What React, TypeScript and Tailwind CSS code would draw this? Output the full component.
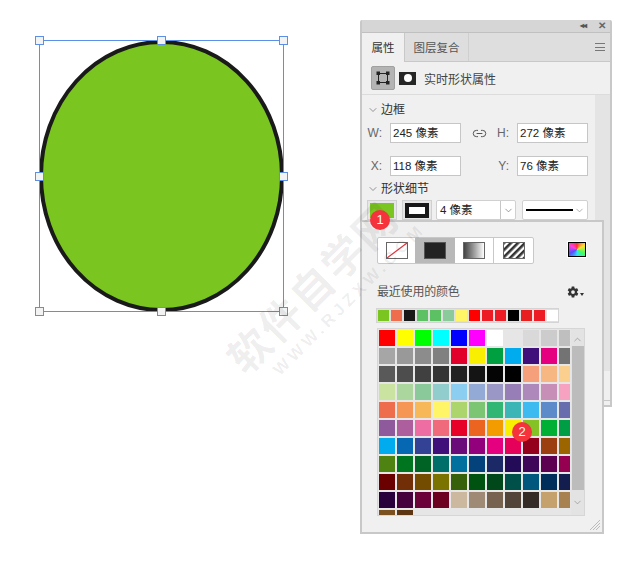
import { ChevronDown, ChevronUp, Link2 } from 'lucide-react'
import { IoSettingsSharp } from 'react-icons/io5'

const font = 'font-["Liberation_Sans","Noto_Sans_CJK_SC",sans-serif]'

const recent = ['#7ac520', '#ee6d4c', '#181818', '#5cc163', '#5cc163', '#8bcb9b', '#fff566', '#ff0000', '#ed1c24', '#ed1c24', '#000000', '#e81f1f', '#ed1c24', '#ffffff']

const swatches = [
  ['#ff0000', '#ffff00', '#00ff00', '#00ffff', '#0000ff', '#ff00ff', '#ffffff', '#e6e6e6', '#d9d9d9', '#cccccc', '#bfbfbf'],
  ['#a6a6a6', '#999999', '#8c8c8c', '#808080', '#e00029', '#f8f000', '#00a040', '#00aced', '#3f107a', '#e4007f', '#737373'],
  ['#595959', '#4d4d4d', '#404040', '#333333', '#222222', '#141414', '#040404', '#000000', '#f5a07a', '#f7b782', '#fbcf8e'],
  ['#cbe3a0', '#abd69e', '#89c99a', '#90cdcc', '#8ccdf2', '#93a9d6', '#9a97c6', '#977eb6', '#ae88ba', '#c78eb8', '#f6a2c0'],
  ['#ee6d4c', '#f59654', '#f6b858', '#fff566', '#acd56e', '#7bc573', '#32b673', '#3bb5b5', '#3dbaef', '#5d8ac8', '#686ead'],
  ['#8e5a9c', '#ad5e9c', '#ee6ea3', '#ef6a7a', '#e60027', '#eb6420', '#f39c00', '#f8f000', '#85c226', '#00b035', '#009e44'],
  ['#00aced', '#0668b3', '#334294', '#3f107a', '#690c7a', '#93007c', '#e4007f', '#e5005a', '#94001b', '#9b3f10', '#9c6500'],
  ['#4e8211', '#00751f', '#006326', '#006f69', '#00709e', '#03427a', '#1b2a66', '#240b57', '#3f0558', '#5d0052', '#960050'],
  ['#6a0000', '#722e07', '#744c00', '#7a7300', '#37600a', '#005211', '#00471a', '#00504a', '#00577e', '#002e5a', '#131e4e'],
  ['#2a003c', '#46003c', '#6c0039', '#6c0021', '#cbb89e', '#9f8b75', '#76624f', '#534439', '#352b27', '#c5a26d', '#a7814f'],
  ['#7a5020', '#5c3513'],
]

function Handle({ className }: { className: string }) {
  return <div className={`absolute w-[9px] h-[9px] bg-[#f3f3f3] border border-[#5b8fe8] ${className}`} />
}

function Badge({ n, className }: { n: number; className: string }) {
  return (
    <div className={`absolute w-5 h-5 rounded-full bg-[#f4333c] text-white text-[13px] leading-5 text-center ${className}`}>{n}</div>
  )
}

function Field({ label, value, labelWidth }: { label: string; value: string; labelWidth: string }) {
  return (
    <div className="flex items-center">
      <span className={`${labelWidth} text-[12px] text-[#666] text-right pr-[8px]`}>{label}</span>
      <div className="w-[71px] h-5 bg-white border border-[#c6c6c6] text-[11.5px] leading-[19px] pl-[2px] text-[#222]">{value}</div>
    </div>
  )
}

export default function App() {
  return (
    <div className={`relative w-[639px] h-[569px] bg-white overflow-hidden ${font}`}>
      {/* shape on canvas */}
      <svg className="absolute left-[39px] top-[40px]" width="246" height="273" viewBox="0 0 246 273">
        <ellipse cx="122.5" cy="136" rx="120.5" ry="134" fill="#7ac520" stroke="#1a1a1a" strokeWidth="4" />
        <rect x="0.5" y="0.5" width="244" height="271" fill="none" stroke="#5b8fe8" strokeWidth="1" />
      </svg>
      <Handle className="left-[35px] top-[36px]" />
      <Handle className="left-[157px] top-[36px]" />
      <Handle className="left-[279px] top-[36px]" />
      <Handle className="left-[35px] top-[172px]" />
      <Handle className="left-[279px] top-[172px]" />
      <Handle className="left-[35px] top-[307px]" />
      <Handle className="left-[157px] top-[307px]" />
      <Handle className="left-[279px] top-[307px]" />

      {/* properties panel */}
      <div className="absolute left-[360px] top-[20px] w-[252px] h-[387px] bg-[#f0f0f0] border-2 border-[#c8c8c8] border-t-0 rounded-t-[2px] flex flex-col">
        <div className="h-[13px] shrink-0 bg-[#d6d6d6] border-b border-[#c0c0c0] flex items-center justify-end gap-[12px] pr-[4px] text-[#555]">
          <span className="text-[8px] leading-none tracking-[-1px] font-bold">◂◂</span>
          <span className="text-[10px] leading-none font-bold text-[#666]">✕</span>
        </div>
        <div className="h-[29px] shrink-0 flex bg-[#dedede] border-b border-[#c8c8c8] text-[11.5px]">
          <div className="w-[43px] h-[29px] bg-[#f0f0f0] border-r border-[#c8c8c8] text-[#333] text-center leading-[30px]">属性</div>
          <div className="w-[64px] border-r border-[#cfcfcf] text-[#555] text-center leading-[30px]">图层复合</div>
          <div className="ml-auto mr-[5px] mt-[10px] w-[10px] h-[8px] border-y border-[#777] flex items-center">
            <div className="w-full h-px bg-[#777]" />
          </div>
        </div>
        <div className="h-[33px] shrink-0 flex items-center pl-[9px] border-b border-[#dcdcdc]">
          <div className="w-6 h-6 bg-[#b4b4b4] border border-[#a0a0a0] rounded-[2px] flex items-center justify-center">
            <svg width="14" height="14" viewBox="0 0 14 14" fill="none" stroke="#222" strokeWidth="1">
              <rect x="2.5" y="2.5" width="9" height="9" />
              <rect x="1" y="1" width="2.5" height="2.5" fill="#222" />
              <rect x="10.5" y="1" width="2.5" height="2.5" fill="#222" />
              <rect x="1" y="10.5" width="2.5" height="2.5" fill="#222" />
              <rect x="10.5" y="10.5" width="2.5" height="2.5" fill="#222" />
            </svg>
          </div>
          <div className="ml-1 w-[17px] h-[13px] bg-[#262626] flex items-center justify-center">
            <div className="w-2 h-2 rounded-full bg-white" />
          </div>
          <span className="ml-2 mt-[3px] text-[12px] text-[#444]">实时形状属性</span>
        </div>
        <div className="flex-1 flex min-h-0">
          <div className="flex-1 min-w-0 pt-[6px] pl-[5px]">
            <div className="flex items-center h-[18px] text-[12px] text-[#333]">
              <ChevronDown size={12} strokeWidth={1.2} className="mr-[2px] text-[#555]" />
              边框
            </div>
            <div className="flex items-center mt-[4px]">
              <Field label="W:" value="245 像素" labelWidth="w-[23px]" />
              <Link2 size={15} strokeWidth={1.6} className="ml-[11px] text-[#555]" />
              <Field label="H:" value="272 像素" labelWidth="w-[30px]" />
            </div>
            <div className="flex items-center mt-[13px]">
              <Field label="X:" value="118 像素" labelWidth="w-[23px]" />
              <div className="w-[26px]" />
              <Field label="Y:" value="76 像素" labelWidth="w-[30px]" />
            </div>
            <div className="flex items-center h-[18px] mt-[4px] text-[12px] text-[#333]">
              <ChevronDown size={12} strokeWidth={1.2} className="mr-[2px] text-[#555]" />
              形状细节
            </div>
          </div>
          <div className="w-[15px] shrink-0 flex flex-col">
            <div className="h-[276px] bg-[#e4e4e4]" />
          </div>
        </div>
        <div className="h-[5px] shrink-0 border-t border-[#c8c8c8]" />
      </div>

      {/* fill / stroke row, above the popup */}
      <div className="absolute left-[367px] top-[200px] flex items-start">
        <div className="w-[30px] h-5 bg-[#e6e6e6] border border-[#d0d0d0] flex items-center justify-center">
          <div className="w-6 h-[15px] bg-[#7ac520]" />
        </div>
        <div className="ml-[5px] w-[30px] h-5 bg-[#e6e6e6] border border-[#d0d0d0] flex items-center justify-center">
          <div className="w-6 h-[15px] border-[4px] border-[#181818] bg-white" />
        </div>
        <div className="ml-1 w-[80px] h-5 bg-white border border-[#d0d0d0] rounded-[2px] flex text-[11.5px] text-[#222] leading-[19px]">
          <span className="flex-1 pl-[3px]">4 像素</span>
          <div className="w-[15px] border-l border-[#c6c6c6] flex items-center justify-center">
            <ChevronDown size={11} strokeWidth={1.4} className="text-[#666]" />
          </div>
        </div>
        <div className="ml-[6px] w-[66px] h-5 bg-white border border-[#d0d0d0] rounded-[2px] flex items-center pl-[3px]">
          <div className="w-[47px] h-[2px] bg-black" />
          <ChevronDown size={11} strokeWidth={1.4} className="ml-[1px] text-[#888]" />
        </div>
      </div>

      {/* colour popup */}
      <div className="absolute left-[360px] top-[220px] w-[244px] h-[314px] bg-[#f0f0f0] border-2 border-[#c8c8c8] pt-[15px] pl-[15px]">
        <div className="flex items-start">
          <div className="h-[27px] flex border border-[#c8c8c8] bg-white rounded-[2px]">
            <div className="w-[37px] flex items-center justify-center">
              <svg width="22" height="17" viewBox="0 0 22 17">
                <rect x="0.5" y="0.5" width="21" height="16" fill="white" stroke="#666" />
                <line x1="1" y1="16" x2="21" y2="1" stroke="#e2333a" strokeWidth="1.2" />
              </svg>
            </div>
            <div className="w-[40px] bg-[#b9b9b9] flex items-center justify-center">
              <div className="w-[22px] h-[17px] bg-[#222] border border-[#555]" />
            </div>
            <div className="w-[39px] flex items-center justify-center border-r border-[#c8c8c8]">
              <div className="w-[22px] h-[17px] border border-[#666] bg-gradient-to-r from-[#444] to-white" />
            </div>
            <div className="w-[39px] flex items-center justify-center">
              <svg width="22" height="17" viewBox="0 0 22 17">
                <defs>
                  <pattern id="hatch" width="5" height="5" patternUnits="userSpaceOnUse" patternTransform="rotate(-45)">
                    <rect width="5" height="2.6" fill="#333" />
                  </pattern>
                </defs>
                <rect x="0.5" y="0.5" width="21" height="16" fill="url(#hatch)" stroke="#666" />
              </svg>
            </div>
          </div>
          <div className="ml-[33px] mt-[4px] w-[20px] h-[17px] p-[1px] bg-white">
            <div className="w-full h-full border border-black bg-[conic-gradient(#ff3030,#ffe030,#40ff60,#30e0ff,#5050ff,#ff40e0,#ff3030)]" />
          </div>
        </div>
        <div className="flex items-center h-4 mt-[20px] pr-[18px] text-[12px] text-[#555]">
          <span className="tracking-[-0.2px]">最近使用的颜色</span>
          <IoSettingsSharp size={12} className="ml-auto text-[#333]" />
          <svg width="4" height="3" viewBox="0 0 4 3" className="ml-[1px] mt-[5px]">
            <path d="M0 0H4L2 3Z" fill="#333" />
          </svg>
        </div>
        <div className="mt-[8px] -ml-[1px] w-[183px] h-[15px] bg-[#e0e0e0] flex items-center gap-[2px] px-[1px] border border-[#d4d4d4]">
          {recent.map((c, i) => (
            <div key={i} className="w-[11px] h-[11px] shrink-0" style={{ backgroundColor: c }} />
          ))}
        </div>
        <div className="mt-[5px] flex w-[208px] h-[188px] bg-[#e6e6e6] border border-[#d6d6d6] overflow-hidden">
          <div className="w-[193px] bg-[#e6e6e6] pl-[1px] pt-[1px] flex flex-col gap-[2px] shrink-0 overflow-hidden">
            {swatches.map((row, i) => (
              <div key={i} className="flex gap-[2px] h-4 shrink-0">
                {row.map((c, j) => (
                  <div key={j} className={j === 10 ? 'w-[11px] h-4' : 'w-4 h-4'} style={{ backgroundColor: c }} />
                ))}
              </div>
            ))}
          </div>
          <div className="w-[13px] shrink-0 flex flex-col items-center bg-[#e3e3e3]">
            <ChevronUp size={11} strokeWidth={1.4} className="mt-[5px] mb-[1px] text-[#888]" />
            <div className="w-[12px] flex-1 bg-[#bcbcbc]" />
            <ChevronDown size={11} strokeWidth={1.4} className="my-[7px] text-[#888]" />
          </div>
        </div>
      </div>
      {/* resize grip */}
      <svg className="absolute left-[589px] top-[519px]" width="12" height="12" viewBox="0 0 12 12" stroke="#bbb" strokeWidth="1">
        <line x1="1" y1="11" x2="11" y2="1" />
        <line x1="4" y1="11" x2="11" y2="4" />
        <line x1="7" y1="11" x2="11" y2="7" />
      </svg>

      {/* watermark lies over the page */}
      <div className="absolute left-[321px] top-[296px] w-[240px] -translate-x-1/2 -translate-y-1/2 -rotate-45 text-black/[0.07] pointer-events-none select-none">
        <div className="text-[42px] leading-[46px] font-bold tracking-[2px] whitespace-nowrap text-center">软件自学网</div>
        <div className="ml-[34px] text-[17px] leading-[20px] font-bold tracking-[4px] whitespace-nowrap text-center">WWW.RJZXW.COM</div>
      </div>

      <Badge n={1} className="left-[370px] top-[210px]" />
      <Badge n={2} className="left-[512px] top-[422px]" />
    </div>
  )
}
